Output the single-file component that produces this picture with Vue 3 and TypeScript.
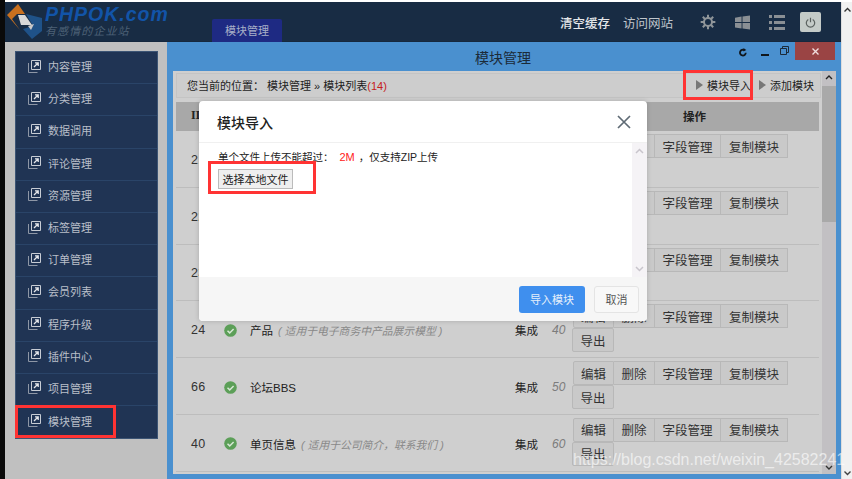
<script setup lang="ts">
const menu: string[] = ['内容管理', '分类管理', '数据调用', '评论管理', '资源管理', '标签管理', '订单管理', '会员列表', '程序升级', '插件中心', '项目管理', '模块管理']

interface Row { id: string; name: string; note: string; num: string }
const rows: Row[] = [
  { id: '21', name: '新闻资讯', note: '', num: '10' },
  { id: '22', name: '图片展示', note: '', num: '20' },
  { id: '23', name: '下载中心', note: '', num: '30' },
  { id: '24', name: '产品', note: '( 适用于电子商务中产品展示模型 )', num: '40' },
  { id: '66', name: '论坛BBS', note: '', num: '50' },
  { id: '40', name: '单页信息', note: '( 适用于公司简介，联系我们 )', num: '60' },
]
const ops: string[] = ['编辑', '删除', '字段管理', '复制模块']
</script>

<template>
  <div class="page">
    <div class="edge"></div>
    <div class="shell">
      <header class="header">
        <svg class="logo" width="36" height="36" viewBox="0 0 36 36">
          <path d="M0 11 L11 0 L18 10 L10 10 L5 15 L13 26 Z" fill="#c8701f" />
          <path d="M11 11 L18 11 L25 21 L14 21 Z" fill="#d8d8d8" />
          <path d="M19 10 L35 14 L35 27 L25 35 L16 25 L26 22 Z" fill="#1f5288" />
          <path d="M21 22 L27 20 L24 26 Z" fill="#c9c9c9" />
        </svg>
        <div class="brand">
          <div class="brand-name">PHPOK.com</div>
          <div class="brand-sub">有感情的企业站</div>
        </div>
        <div class="tab">模块管理</div>
        <a class="head-link strong">清空缓存</a>
        <a class="head-link visit">访问网站</a>
        <svg class="hicon gear" width="16" height="16" viewBox="0 0 24 24" fill="none" stroke="#8f9599" stroke-width="3">
          <circle cx="12" cy="12" r="6" />
          <path d="M12 1v5M12 18v5M1 12h5M18 12h5M4.2 4.2l3.6 3.6M16.2 16.2l3.6 3.6M19.8 4.2l-3.6 3.6M7.8 16.2l-3.6 3.6" />
        </svg>
        <svg class="hicon win" width="15" height="15" viewBox="0 0 16 15" fill="#8a8f94">
          <path d="M0 2.5 7 1v6H0zM8 1l8-1v7H8zM0 8h7v6l-7-1.2zM8 8h8v7l-8-1z" />
        </svg>
        <svg class="hicon list" width="16" height="15" viewBox="0 0 16 15" fill="#8a8f94">
          <path d="M0 0h3v3H0zM5 0h11v3H5zM0 6h3v3H0zM5 6h11v3H5zM0 12h3v3H0zM5 12h11v3H5z" />
        </svg>
        <div class="power">
          <svg width="11" height="11" viewBox="0 0 12 12" fill="none" stroke="#59605e" stroke-width="1.3">
            <path d="M3.6 2.6a4.6 4.6 0 1 0 4.8 0M6 .8v5" />
          </svg>
        </div>
      </header>

      <div class="main">
        <aside class="side">
          <nav class="menu">
            <div v-for="m in menu" :key="m" class="item">
              <svg width="13" height="13" viewBox="0 0 13 13" fill="none" stroke="#c7ccd4" stroke-width="1">
                <path d="M3.5.5h9v9h-9z" />
                <path d="M.5 3v9.500h9" stroke="#8e97a6" />
                <path d="M6 7l4-4M7 2.800h3.200V6" stroke-width="1.300" stroke="#e4e6ea" />
              </svg>
              <span>{{ m }}</span>
            </div>
          </nav>
        </aside>

        <section class="window">
          <div class="titlebar">
            <span class="title">模块管理</span>
            <div class="controls">
              <svg width="8" height="9" viewBox="0 0 8 9" fill="none" stroke="#10161c" stroke-width="1.800">
                <path d="M6.800 4.800a2.900 2.900 0 1 1-1.500-2.700" />
                <path d="M4.500 0v3.600L7.300 2z" fill="#10161c" stroke="none" />
              </svg>
              <span class="min"></span>
              <svg class="restore" width="9" height="9" viewBox="0 0 9 9" fill="none" stroke="#1c2a38" stroke-width="1">
                <path d="M.5 2.500h6v6h-6zM2.500 2.500v-2h6v6h-2" />
              </svg>
              <div class="close">
                <svg width="7" height="7" viewBox="0 0 7 7" stroke="#f1dede" stroke-width="1.400"><path d="M.5.500l6 6M6.500.500l-6 6" /></svg>
              </div>
            </div>
          </div>

          <div class="frame">
            <div class="content">
              <div class="crumb">
                <span class="where">您当前的位置： 模块管理 » 模块列表<em>(14)</em></span>
                <span class="act first"><i></i>模块导入</span>
                <span class="act"><i></i>添加模块</span>
              </div>
              <div class="thead">
                <span class="id-h">ID</span>
                <span></span><span></span><span></span><span></span>
                <span class="op-h">操作</span>
              </div>
              <div v-for="r in rows" :key="r.id" class="row">
                <span class="id">{{ r.id }}</span>
                <svg class="ok" width="13" height="13" viewBox="0 0 13 13">
                  <circle cx="6.500" cy="6.500" r="6.300" fill="#5c9f58" />
                  <path d="M3.500 6.800l2.200 2.100 3.900-4" fill="none" stroke="#d8e8d6" stroke-width="1.500" />
                </svg>
                <span class="name">{{ r.name }}<em>{{ r.note }}</em></span>
                <span class="kind">集成</span>
                <span class="num">{{ r.num }}</span>
                <div class="ops">
                  <button v-for="o in ops" :key="o" class="op">{{ o }}</button>
                  <button class="op solo">导出</button>
                </div>
              </div>
            </div>
            <div class="vbar">
              <svg width="14" height="13" viewBox="0 0 14 13" fill="none" stroke="#222" stroke-width="1.400"><path d="M4 8l3-3 3 3" /></svg>
              <div class="thumb"></div>
              <svg class="down" width="14" height="13" viewBox="0 0 14 13" fill="none" stroke="#333" stroke-width="1.400"><path d="M4 5l3 3 3-3" /></svg>
            </div>
          </div>
        </section>
      </div>
    </div>
    <div class="pagebar">
      <svg width="11" height="12" viewBox="0 0 11 12" fill="none" stroke="#333" stroke-width="1.400"><path d="M2.500 7.500l3-3 3 3" /></svg>
      <svg class="down" width="11" height="12" viewBox="0 0 11 12" fill="none" stroke="#444" stroke-width="1.400"><path d="M2.500 4.500l3 3 3-3" /></svg>
    </div>

    <div class="modal">
      <div class="m-head">
        <span>模块导入</span>
        <svg width="14" height="14" viewBox="0 0 14 14" stroke="#5f6b75" stroke-width="1.700"><path d="M1 1l12 12M13 1L1 13" /></svg>
      </div>
      <div class="m-body">
        <div class="m-text">
          <p>单个文件上传不能超过：<b>2M</b>，仅支持ZIP上传</p>
          <button class="file">选择本地文件</button>
        </div>
        <div class="m-bar">
          <svg width="15" height="13" viewBox="0 0 15 13" fill="none" stroke="#c9c5cc" stroke-width="1.500"><path d="M4 8l3.500-3.500L11 8" /></svg>
          <svg width="15" height="13" viewBox="0 0 15 13" fill="none" stroke="#c9c5cc" stroke-width="1.500"><path d="M4 5l3.500 3.500L11 5" /></svg>
        </div>
      </div>
      <div class="m-foot">
        <button class="primary">导入模块</button>
        <button class="cancel">取消</button>
      </div>
    </div>

    <div class="mark m1"></div>
    <div class="mark m2"></div>
    <div class="mark m3"></div>
    <div class="wm">https://blog.csdn.net/weixin_42582241</div>
  </div>
</template>

<style>
html, body { margin: 0; background: #fff; }
</style>

<style scoped>
.page {
  position: relative;
  display: flex;
  width: 852px;
  height: 479px;
  padding-top: 2px;
  box-sizing: border-box;
  overflow: hidden;
  background: #fff;
  font-family: "Liberation Sans", "Noto Sans CJK SC", sans-serif;
  font-size: 12px;
  color: #222;
}
.edge { width: 5px; margin-top: -2px; background: #0a0a0a; flex: none; }
.shell { flex: 1; min-width: 0; display: flex; flex-direction: column; }
.pagebar {
  width: 11px; flex: none; background: #f1f1f1; border-left: 1px solid #ddd;
  box-sizing: border-box; display: flex; flex-direction: column; justify-content: space-between;
  padding: 2px 0 0;
}
.header {
  height: 40px; flex: none; display: flex; align-items: center; background: #182c44;
  box-shadow: inset 0 -1px 0 #16283e;
}
.logo { margin: 0 0 0 2px; flex: none; }
.brand { margin-left: 2px; width: 167px; font-style: italic; }
.brand-name { font: italic bold 19.500px/18px "Liberation Sans", sans-serif; letter-spacing: 1px; color: #1254a8; margin-top: -1px; }
.brand-sub { font-size: 11px; line-height: 14px; letter-spacing: 1.100px; color: #4d6176; margin-top: 1px; }
.tab {
  align-self: flex-end; width: 70px; height: 23px; line-height: 24px; text-align: center;
  background: #1e2a83; border-radius: 2px 2px 0 0; color: #a8b0c8; font-size: 11px;
  box-sizing: border-box;
}
.head-link { font-size: 12.500px; white-space: nowrap; }
.strong { margin-left: 278px; color: #e4e7ea; font-weight: 500; }
.visit { margin-left: 13px; color: #c0c6cc; font-size: 12.500px; }
.hicon { flex: none; }
.gear { margin-left: 27px; }
.win { margin-left: 19px; }
.list { margin-left: 19px; }
.power {
  width: 21px; height: 20px; margin-left: 15px; background: #c4cbc8; border-radius: 2px;
  display: flex; align-items: center; justify-content: center; flex: none;
}
.main { flex: 1; min-height: 0; display: flex; }
.side { width: 162px; flex: none; background: #c0c0c0; padding: 9px 9px 0 10px; box-sizing: border-box; }
.menu { background: #203454; border: 1px solid #3c5474; }
.item {
  height: 32.200px; box-sizing: border-box; display: flex; align-items: center; padding: 0 0 3px 12px;
  gap: 7px; color: #b9bfc9; font-size: 11px; border-bottom: 1px solid #2a4468;
}
.item:last-child { border-bottom: none; }
.item svg { flex: none; }
.window { flex: 1; min-width: 0; background: #4a90cf; display: flex; flex-direction: column; padding: 1px 5px 5px 6px; box-sizing: border-box; }
.titlebar { height: 29px; flex: none; display: flex; position: relative; justify-content: center; margin-right: -5px; margin-top: -1px; }
.title { font-size: 14px; line-height: 32px; color: #1b2a38; margin-right: 8px; }
.controls { position: absolute; right: 6px; top: 0; display: flex; align-items: flex-start; }
.controls > svg:first-child { margin: 6px 14px 0 0; }
.min { width: 8px; height: 2px; background: #10161c; margin: 12px 11px 0 0; }
.restore { margin: 4px 6px 0 0; }
.close { width: 40px; height: 18px; background: #9a4444; display: flex; align-items: center; justify-content: center; }
.frame { flex: 1; min-height: 0; display: flex; background: #cfcfcf; overflow: hidden; }
.content { flex: 1; min-width: 0; padding: 2px 3px 0; overflow: hidden; box-sizing: border-box; }
.crumb {
  height: 25px; box-sizing: border-box; display: flex; align-items: center; border: 1px solid #c4c4c4;
  background: #cdcdcd; padding: 0 0 2px 10px; font-size: 11px; color: #1d1d1d; margin-right: -2px;
}
.where { flex: 1; white-space: nowrap; }
.where em { color: #c51c1c; font-style: normal; }
.act { display: flex; align-items: center; gap: 4px; margin-right: 6px; font-size: 11px; white-space: nowrap; }
.act.first { margin-right: 8px; }
.act i { display: block; width: 0; height: 0; border-left: 7px solid #777; border-top: 5px solid transparent; border-bottom: 5px solid transparent; }
.thead, .row { display: grid; grid-template-columns: 48px 26px 265px 37px 21px 243px; align-items: center; }
.thead { height: 29px; margin-top: 4px; padding-bottom: 2px; box-sizing: border-box; background: #a8a8a8; font-weight: bold; }
.id-h { padding-left: 15px; font-family: "Liberation Serif", serif; }
.op-h { padding-left: 110px; font-size: 11.500px; }
.row { height: 56.800px; box-sizing: border-box; padding-top: 2px; border-bottom: 1px solid #bdbdbd; }
.row:first-of-type { margin-top: 1px; }
.id { padding-left: 15px; font-size: 12.500px; color: #333; letter-spacing: .4px; }
.name { font-size: 11.500px; color: #222; white-space: nowrap; }
.name em { color: #888; font-size: 10.800px; margin-left: 5px; }
.kind { font-size: 11.500px; }
.num { font-style: italic; color: #7c7c7c; font-size: 12px; }
.ops { display: flex; flex-wrap: wrap; align-self: start; padding-top: 1px; }
.op {
  height: 24px; padding: 0; margin: 0; width: 41px; border: 1px solid #b8b8b8; border-width: 1px 1px 1px 0;
  background: #c9c9c9; color: #333; font: 12.500px "Liberation Sans", "Noto Sans CJK SC", sans-serif;
  box-sizing: border-box;
}
.op:nth-child(1) { border-left-width: 1px; border-radius: 2px 0 0 2px; }
.op:nth-child(3) { width: 66px; }
.op:nth-child(4) { width: 67px; }
.solo { width: 42px; border-left-width: 1px; border-radius: 2px; margin-left: -1px; }
.vbar { width: 14px; flex: none; background: #c2c0c3; display: flex; flex-direction: column; }
.thumb { height: 136px; background: #a9a9a9; margin-top: 2px; }
.vbar .down { margin-top: auto; }
.modal {
  position: absolute; left: 199px; top: 101px; width: 448px; height: 220px; background: #fff;
  border-radius: 4px; display: flex; flex-direction: column; overflow: hidden;
  box-shadow: 0 0 5px rgba(0,0,0,.18);
}
.m-head {
  height: 41px; flex: none; display: flex; align-items: center; justify-content: space-between;
  padding: 0 16px 0 18px; font-size: 14px; font-weight: 500; color: #222; border-bottom: 1px solid #f0f0f0;
}
.m-body { flex: 1; min-height: 0; display: flex; }
.m-text { flex: 1; padding: 7px 19px; }
.m-text p { margin: 0; font-size: 10.500px; line-height: 15px; color: #222; height: 18px; }
.m-text b { color: #f22; font-weight: normal; font-size: 11px; margin-left: 6px; margin-right: 4px; }
.file { width: 75px; height: 20px; margin-top: 1px; padding: 0; background: #efefef; border: 1px solid #bbb; font: 11px "Liberation Sans", "Noto Sans CJK SC", sans-serif; color: #222; display: block; }
.m-bar { width: 15px; flex: none; background: #f5f3f6; display: flex; flex-direction: column; justify-content: space-between; padding: 2px 0; }
.m-foot { height: 44px; flex: none; display: flex; justify-content: flex-end; align-items: center; gap: 9px; background: #f6f6f6; padding: 0 8px 0 0; }
.primary { width: 66px; height: 27px; background: #3f8fee; border: none; border-radius: 3px; color: #e6effb; font: 11px "Liberation Sans", "Noto Sans CJK SC", sans-serif; padding: 0; }
.cancel { width: 45px; height: 27px; background: #f8f8f8; border: 1px solid #e4e4e4; border-radius: 3px; color: #555; font: 11px "Liberation Sans", "Noto Sans CJK SC", sans-serif; padding: 0; }
.mark { position: absolute; border: 3px solid #f33; box-sizing: border-box; }
.m1 { left: 683px; top: 70px; width: 70px; height: 30px; }
.m2 { left: 208px; top: 161px; width: 108px; height: 33px; }
.m3 { left: 15px; top: 405px; width: 101px; height: 33px; }
.wm { position: absolute; left: 573px; top: 451px; font-size: 16px; color: rgba(255,255,255,.62); white-space: nowrap; }
</style>
